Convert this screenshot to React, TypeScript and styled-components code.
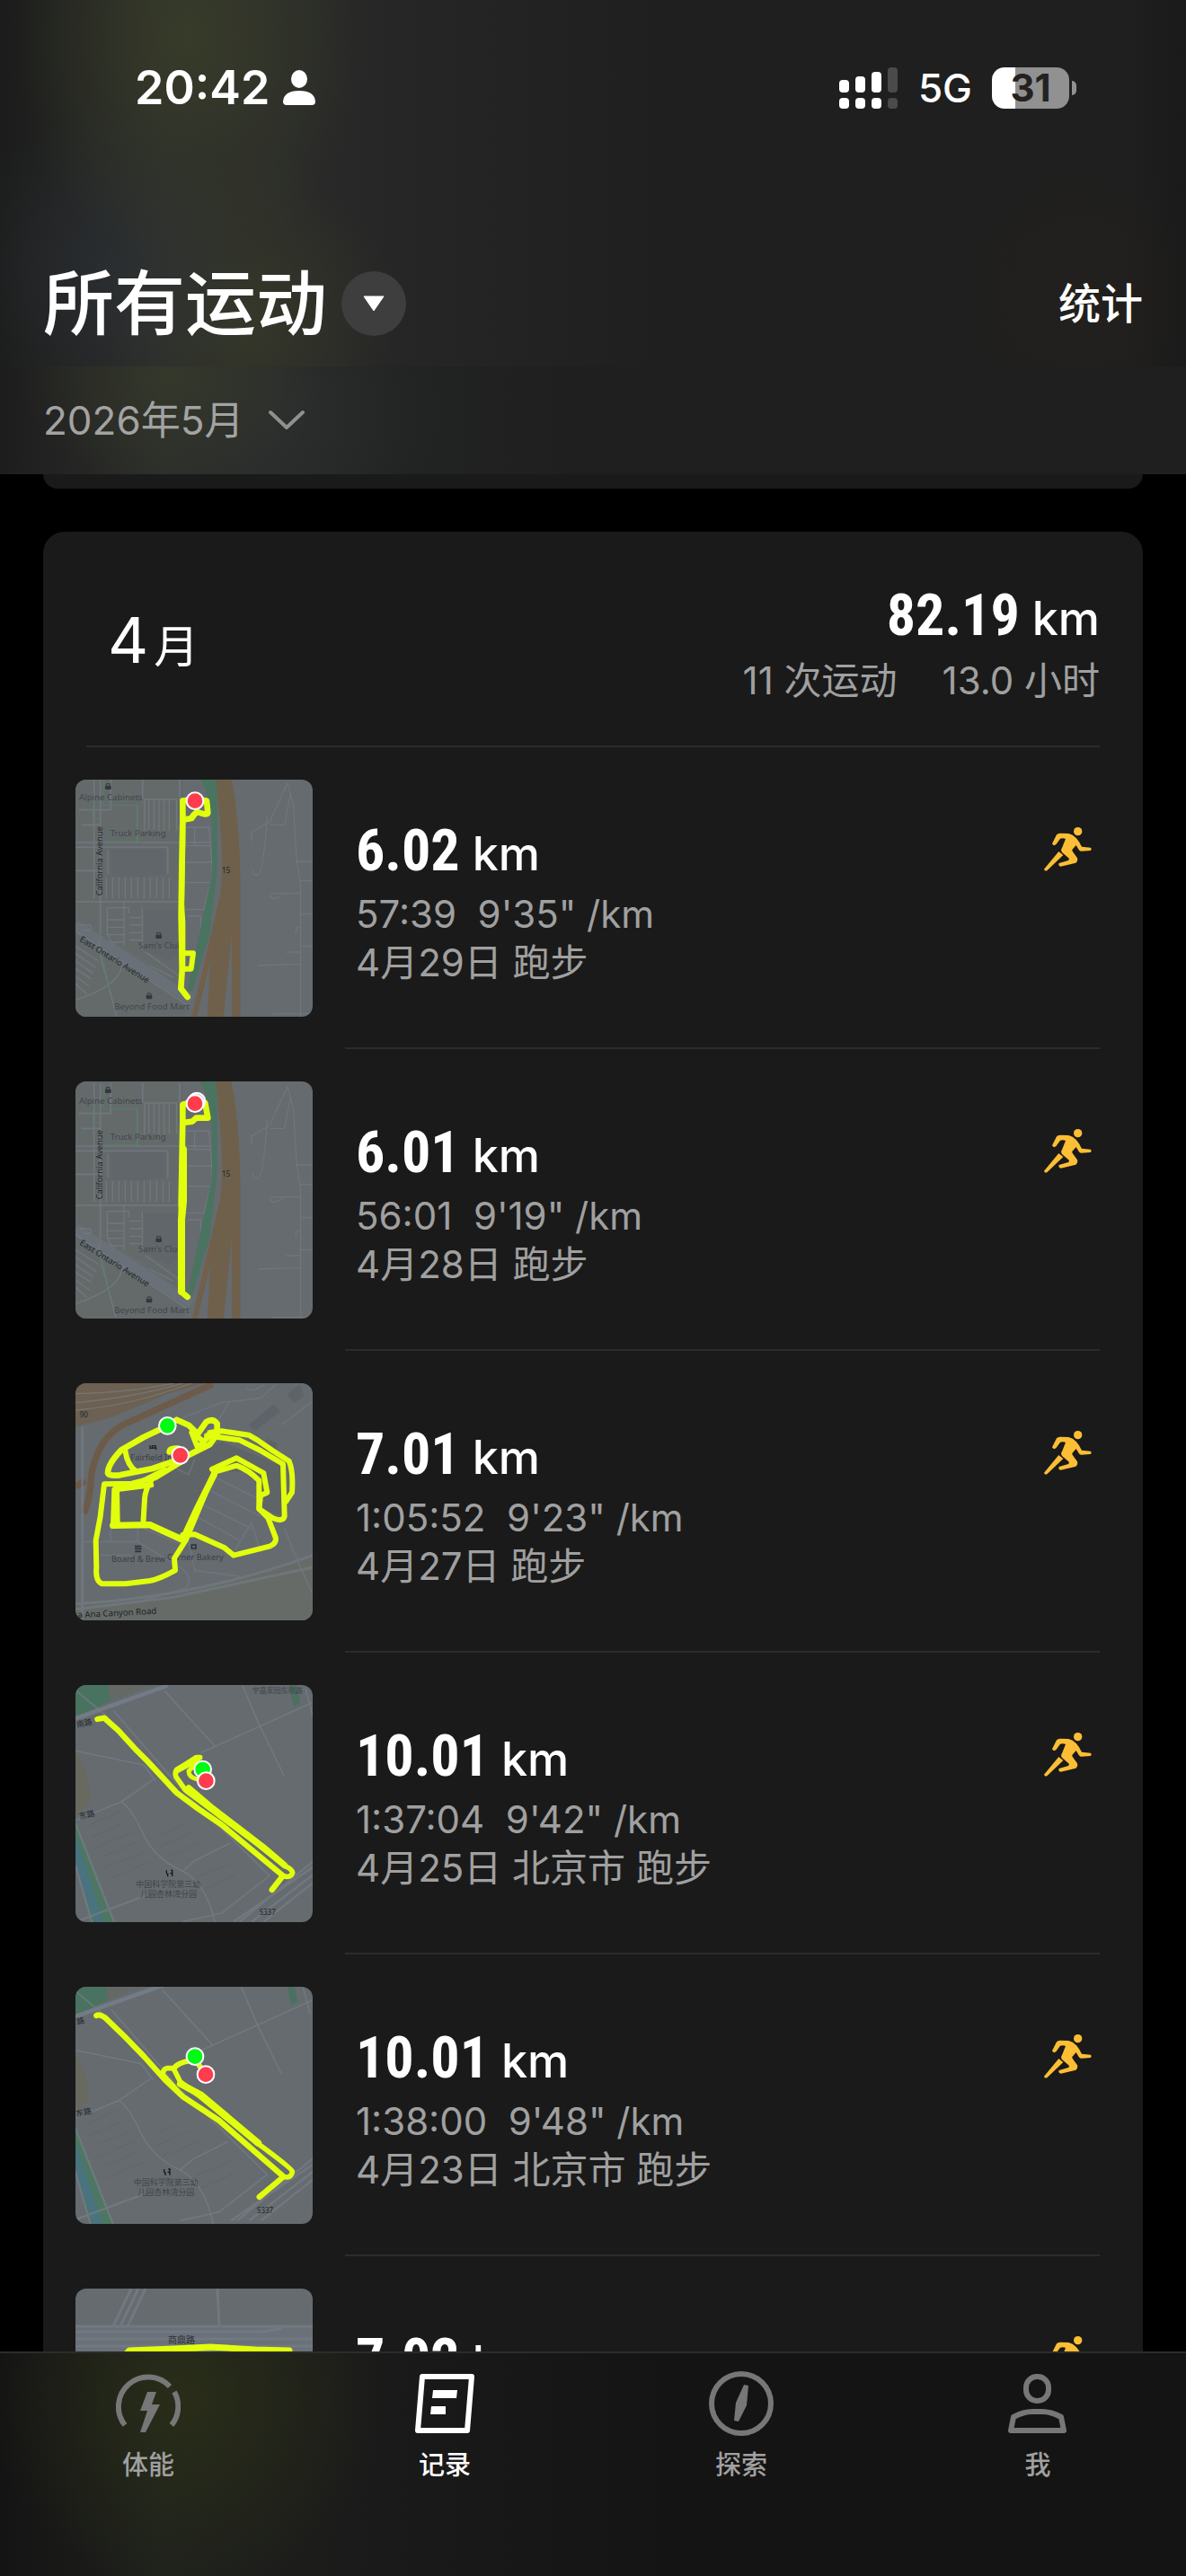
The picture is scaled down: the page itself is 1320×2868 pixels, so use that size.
import React from "react";
import styled, { createGlobalStyle, css } from "styled-components";

const sans = `Inter, "Noto Sans CJK SC", sans-serif`;
const condensed = `"Roboto Condensed", "Liberation Sans Narrow", "Roboto", "Noto Sans CJK SC", sans-serif`;

const GlobalStyle = createGlobalStyle`
  * { box-sizing: border-box; }
  body { margin: 0; background: #000; }
  h1, h2, p, ul { margin: 0; padding: 0; }
  ul { list-style: none; }
  a { color: inherit; text-decoration: none; }
  button { border: 0; padding: 0; background: none; color: inherit; font: inherit; cursor: pointer; }
`;

const Screen = styled.div`
  display: flex;
  flex-direction: column;
  height: 100vh;
  background: #000;
  color: #fff;
  font-family: ${sans};
`;

const Header = styled.header`
  flex: none;
`;

const HeaderTop = styled.div`
  display: flex;
  flex-direction: column;
  height: 408px;
  padding: 0 48px;
  background:
    radial-gradient(ellipse 200px 260px at 210px 40px, rgba(62, 68, 40, 0.65), rgba(62, 68, 40, 0)),
    radial-gradient(ellipse 170px 180px at 120px 300px, rgba(46, 51, 58, 0.55), rgba(46, 51, 58, 0)),
    radial-gradient(ellipse 170px 180px at 270px 350px, rgba(60, 64, 40, 0.6), rgba(60, 64, 40, 0)),
    radial-gradient(ellipse 150px 160px at 1200px 330px, rgba(40, 34, 28, 0.4), rgba(40, 34, 28, 0)),
    linear-gradient(90deg, #1b1c1b 0, #2a2b2a 180px, #2a2b2a 300px, #262626 440px, #1f1f1f 740px, #1f1f1f 95%, #1a1a1a 100%);
`;

const StatusBar = styled.div`
  display: flex;
  flex: none;
  align-items: center;
  justify-content: space-between;
  height: 196px;
  padding: 0 82px 0 102px;
`;

const StatusGroup = styled.div<{ $gap: number }>`
  display: flex;
  align-items: center;
  gap: ${(p) => p.$gap}px;
`;

const Clock = styled.span`
  font-size: 52px;
  font-weight: 600;
  line-height: 64px;
`;

const Network = styled.span`
  font-size: 44px;
  font-weight: 500;
  line-height: 64px;
`;

const Battery = styled.span`
  position: relative;
  display: flex;
  align-items: center;
  justify-content: center;
  width: 86px;
  height: 46px;
  border-radius: 14px;
  background: linear-gradient(90deg, #fff 30%, #919191 30%);
  color: #222;
  font-size: 42px;
  font-weight: 700;
  line-height: 46px;

  &::after {
    content: "";
    position: absolute;
    right: -8px;
    width: 5px;
    height: 16px;
    border-radius: 0 5px 5px 0;
    background: #919191;
  }
`;

const TitleBar = styled.div`
  display: flex;
  flex: 1;
  align-items: center;
  justify-content: space-between;
  padding-top: 72px;
`;

const TitleGroup = styled.div`
  display: flex;
  align-items: center;
  gap: 16px;
`;

const Title = styled.h1`
  font-size: 79px;
  font-weight: 500;
  line-height: 96px;
`;

const RoundButton = styled.button`
  display: flex;
  align-items: center;
  justify-content: center;
  width: 72px;
  height: 72px;
  border-radius: 50%;
  background: #3e3e3e;
`;

const StatsButton = styled.button`
  font-size: 47px;
  font-weight: 500;
  line-height: 60px;
`;

const DateBar = styled.div`
  display: flex;
  align-items: center;
  height: 120px;
  padding: 0 48px;
  background:
    radial-gradient(ellipse 170px 130px at 190px 10px, rgba(58, 62, 42, 0.6), rgba(58, 62, 42, 0)),
    radial-gradient(ellipse 170px 120px at 330px 50px, rgba(44, 48, 48, 0.5), rgba(44, 48, 48, 0)),
    linear-gradient(90deg, #1d1d1d 0, #2c2e2b 180px, #2a2c2b 300px, #222323 440px, #1f1f1f 640px, #1f1f1f 100%);
`;

const DateButton = styled.button`
  display: flex;
  align-items: center;
  gap: 28px;
  color: #a3a3a3;
  font-size: 44px;
  line-height: 54px;
`;

const Feed = styled.main`
  flex: 1;
  min-height: 0;
  overflow: hidden;
  padding: 0 48px;
`;

const CardTail = styled.div`
  height: 16px;
  margin-bottom: 48px;
  border-radius: 0 0 24px 24px;
  background: #1a1a1a;
`;

const Card = styled.section`
  border-radius: 24px;
  background: #1a1a1a;
`;

const MonthHeader = styled.div`
  display: flex;
  align-items: center;
  justify-content: space-between;
  height: 240px;
  margin: 0 48px;
  padding: 10px 0 0 24px;
  border-bottom: 2px solid #2c2c2c;
`;

const MonthName = styled.h2`
  display: flex;
  align-items: baseline;
  gap: 6px;
  font-size: 70px;
  font-weight: 400;
  line-height: 88px;
`;

const MonthUnit = styled.span`
  font-size: 50px;
`;

const MonthTotals = styled.div`
  display: flex;
  flex-direction: column;
  align-items: flex-end;
`;

const Distance = styled.p`
  display: flex;
  align-items: baseline;
  gap: 14px;
  font-family: ${condensed};
  font-size: 64px;
  font-weight: 700;
  line-height: 80px;
`;

const Unit = styled.span`
  font-family: ${sans};
  font-size: 52px;
  font-weight: 500;
`;

const TotalsLine = styled.p`
  display: flex;
  gap: 50px;
  color: #a0a0a0;
  font-size: 42px;
  line-height: 58px;
`;

const Row = styled.a`
  display: flex;
  height: 336px;
  padding: 0 48px 0 36px;
`;

const Thumb = styled.svg`
  flex: none;
  width: 264px;
  height: 264px;
  margin: 36px 36px 36px 0;
  border-radius: 12px;
  background: #656b6f;
  font-family: "Noto Sans", "Noto Sans CJK SC", sans-serif;
`;

const RowBody = styled.div`
  display: flex;
  flex: 1;
  align-items: flex-start;
  justify-content: space-between;
  padding: 76px 8px 0 12px;
  border-bottom: 2px solid #2c2c2c;
`;

const Detail = styled.p`
  color: #a0a0a0;
  font-size: 42px;
  line-height: 54px;
  white-space: pre;
`;

const RunnerIcon = styled.svg`
  width: 56px;
  height: 52px;
  margin-top: 12px;
`;

const TabBar = styled.nav`
  display: flex;
  flex: none;
  align-items: flex-start;
  height: 250px;
  border-top: 2px solid #2c2c2c;
  background:
    radial-gradient(ellipse 220px 220px at 210px 50px, rgba(46, 52, 22, 0.65), rgba(46, 52, 22, 0)),
    linear-gradient(90deg, #141414 0, #1f211d 180px, #1a1a1a 420px, #141414 760px, #141414 100%);
`;

const Tab = styled.a<{ $active?: boolean }>`
  display: flex;
  flex: 1;
  flex-direction: column;
  align-items: center;
  gap: 12px;
  padding-top: 20px;
  color: #a0a0a0;
  font-size: 29px;
  font-weight: 500;
  line-height: 42px;
  ${(p) => p.$active && css`color: #fff;`}

  svg {
    width: 72px;
    height: 72px;
    color: ${(p) => (p.$active ? "#fff" : "#777")};
  }
`;

const YELLOW = "#e1ff0c";

type RouteProps = { d: string; width?: number };
const Route = ({ d, width = 20 }: RouteProps) => (
  <path d={d} fill="none" stroke={YELLOW} strokeWidth={width} strokeLinecap="round" strokeLinejoin="round" />
);
const Road = ({ d, width = 5, color = "#767d88" }: RouteProps & { color?: string }) => (
  <path d={d} fill="none" stroke={color} strokeWidth={width} opacity="0.7" strokeLinejoin="round" />
);
const Dot = ({ x, y, color }: { x: number; y: number; color: string }) => (
  <circle cx={x} cy={y} r="28" fill={color} stroke="#fff" strokeWidth="6" />
);
const Shop = ({ x, y }: { x: number; y: number }) => (
  <g fill="#33383e">
    <rect x={x - 10} y={y - 3} width="20" height="13" rx="3" />
    <path d={`M${x - 6} ${y - 2}v-7h12v7`} fill="none" stroke="#33383e" strokeWidth="3" />
  </g>
);

function OntarioBase() {
  return (
    <>
      <path d="M72 60H430V800L300 680L72 560Z" fill="#646a6a" />
      <path d="M72 600L440 840V900H72Z" fill="#646a6a" />
      <path d="M190 310h180v90l-80 8h-95z M300 520h120v150l-40 20-80-40z" fill="#606669" />
      <Road d="M72 294H520M72 310H380L380 400 M155 84V620 M134 84V480 M72 388H150 M84 185H190V84 M92 235H155 M278 170V294 M296 84V150 M420 84V150 M302 150H410V255M302 150V255" />
      <Road d="M317 152V255M334 152V255M351 152V255M368 152V255M385 152V255 M175 410V480M196 410V480M217 410V480M238 410V480M259 410V480M280 410V480M301 410V480M322 410V480M343 410V480M364 410V480M385 410V480 M72 492H430 M180 320V400" width={4} />
      <Road d="M178 512H250V530 M178 512V600L200 640 M180 552H232M180 577H232M180 602H232M180 627H232 M234 490V640 M252 545H295M252 570H295M252 595H295M252 620H295 M295 512V650" width={4} />
      <Road d="M72 570L460 820" width={34} color="#6b727a" />
      <Road d="M72 590L450 840 M88 570H120Q128 578 120 586H100 M150 620L160 690L210 876 M72 690L130 730M72 715L125 750M72 740L118 775M72 765L110 800M72 640L150 690M72 665L140 712 M72 820Q230 770 230 690 M305 660L420 740M320 705L400 745" width={4} />
      <Road d="M165 676Q170 720 185 780 M130 180V215H160 M165 290H278V170H165V84" width={4} color="#4f8462" />
      <Road d="M440 243H518L530 400L500 518H440 M470 243V305 M440 305H525 M440 360H528M440 428H525 M445 540H490V620L480 720" width={4} />
      <path d="M490 72H545V380L520 600L462 790H446L528 400V240Q520 130 490 84Z" fill="#4a7360" />
      <path d="M540 72H592Q622 230 622 420V876H594V600L566 876H512L522 690L478 876H460L555 470Q568 390 555 230Z" fill="#6f604b" />
      <path d="M526 630L490 790M604 560V700" stroke="#805d47" strokeWidth="3" />
      <Road d="M780 95L720 225L660 260V290 M780 95L800 170L810 350L824 440V876 M712 205Q700 400 680 402Q655 400 668 385 M722 235H770L790 130 M810 357H864M822 422H864M822 464H750Q720 462 722 474Q735 490 760 470 M824 533H864M824 640H864M775 660H824M680 705L824 700M730 866H864 M824 576Q800 580 810 598" width={4} color="#737b82" />
      <g fill="#41464b" fontSize="29">
        <text x="84" y="152">Alpine Cabinets</text>
        <text x="188" y="274">Truck Parking</text>
        <text x="282" y="648">Sam's Club</text>
        <text x="202" y="852">Beyond Food Mart</text>
      </g>
      <g fill="#23272c" fontSize="28">
        <text transform="translate(163 472) rotate(-90)">California Avenue</text>
        <text transform="translate(84 622) rotate(32)">East Ontario Avenue</text>
        <text x="560" y="397" fontSize="26">15</text>
      </g>
      <Shop x={181} y={107} />
      <Shop x={350} y={605} />
      <Shop x={318} y={807} />
    </>
  );
}

function MapOne() {
  return (
    <Thumb viewBox="72 84 792 792" aria-hidden="true">
      <OntarioBase />
      <Route d="M446 810L424 782L428 720L425 540L427 380L430 220V155L470 150L510 155L514 195Q510 205 480 192Q465 200 460 213L432 218" />
      <Route d="M427 664H465L458 716H430V560L426 500L430 300V200" width={18} />
      <Dot x={471} y={155} color="#ff3b4e" />
    </Thumb>
  );
}

function MapTwo() {
  return (
    <Thumb viewBox="72 78 792 792" aria-hidden="true">
      <OntarioBase />
      <Route d="M446 798L424 780L428 660L425 480L430 210V155L470 145L505 150L514 200L475 200L462 212L430 216" />
      <Route d="M432 305V480L426 540V780" width={24} />
      <Dot x={477} y={144} color="#d8d8d8" />
      <Dot x={471} y={152} color="#ff3b4e" />
    </Thumb>
  );
}

function MapThree() {
  return (
    <Thumb viewBox="72 75 792 792" aria-hidden="true">
      <path d="M72 75H500L380 110L190 190L72 220Z" fill="#6c6152" />
      <path d="M72 110Q260 105 400 75M72 140Q280 120 430 75M72 165Q260 150 460 75" fill="none" stroke="#77746f" strokeWidth="4" />
      <path d="M100 510Q120 470 125 380Q150 250 240 210L530 78M72 420L105 402" fill="none" stroke="#6d5b4a" strokeWidth="22" />
      <path d="M72 815Q400 800 864 650V867H72Z" fill="#666b67" />
      <path d="M215 430L320 400L560 270L760 350L770 520L700 500L660 370L540 370L430 580L220 545Z" fill="#5f6567" />
      <path d="M650 215l85-70 20 25-85 65zM780 110l40-30 15 40-35 20zM710 260l35 15-10 40-40-10z" fill="#5d6369" />
      <Road d="M72 812Q480 790 864 650M95 220V867M72 830L400 790L864 690" width={9} color="#737a84" />
      <Road d="M430 190L560 140L690 125L740 80M640 90Q660 110 700 80M760 215L864 135M585 140L530 230M100 605H280L420 690Q470 720 440 760L300 800M190 545V605M145 650H260M280 605V560M300 560L440 620M540 390L700 470M515 430L690 520M495 480L660 560M475 520L620 600M450 600L470 700L620 720M770 560Q800 640 864 780M660 540L600 640M660 540L690 640M380 345L450 380L470 330" color="#717884" />
      <g fill="#3b4046" fontSize="28">
        <text x="86" y="190" fontSize="24" fill="#23272c">90</text>
        <text x="256" y="334">Fairfield Inn</text>
        <text x="192" y="671">Board &amp; Brew</text>
        <text x="378" y="665">Corner Bakery</text>
      </g>
      <text fill="#1e2227" fontSize="29" transform="translate(80 859) rotate(-3)">a Ana Canyon Road</text>
      <path d="M321 282v13M321 292h20v5M328 284h12v7h-12z" fill="none" stroke="#23272c" strokeWidth="4" />
      <path d="M270 620h22M270 628h22M271 637h20M460 615h14v12h-14z" fill="none" stroke="#2d3238" strokeWidth="5" />
      <Route d="M378 218L300 255L225 298Q180 345 180 375Q185 386 220 382L330 360L430 325L520 280L545 245L545 210Q530 190 508 205L480 245Q460 225 450 215L410 197L378 218" />
      <Route d="M238 300Q245 350 275 370M520 240L560 235L650 248L680 265L730 300L785 335Q800 370 795 440L775 470" width={18} />
      <Route d="M510 250L620 265L690 300L765 345L770 520Q765 540 730 525L685 495L685 400Q650 365 610 350L540 370" width={18} />
      <Route d="M528 362L610 325L700 375L712 440L690 450L685 495L715 525L740 590Q745 610 720 620L600 650L570 625L470 580L430 582" width={18} />
      <Route d="M540 362L440 600L402 660L405 700Q350 730 320 735L240 745H160Q138 735 142 690L140 600L155 520L168 412L260 410L340 390L430 335" width={18} />
      <Route d="M280 410L370 365M325 400Q305 430 303 460L298 545M208 430L325 415" width={18} />
      <Route d="M208 430L210 540M197 550L320 548L430 598L480 490L535 380" width={22} />
      <Route d="M202 430L198 550M460 240L480 290L520 250M475 250L500 270M385 305Q385 290 415 292" width={18} />
      <Dot x={379} y={217} color="#00fb13" />
      <Dot x={422} y={316} color="#ff3b4e" />
    </Thumb>
  );
}

function BeijingBase() {
  return (
    <>
      <path d="M72 78H180L190 130L72 190Z" fill="#4a7260" />
      <path d="M180 78H330L190 130Z" fill="#646965" />
      <path d="M72 300Q130 400 120 470L72 520Z" fill="#68695f" />
      <path d="M72 530L205 880H130L72 660Z" fill="#4d7762" />
      <path d="M72 580L170 880H140L72 680Z" fill="#47728a" opacity="0.7" />
      <path d="M785 75L808 75L822 138L800 150Z" fill="#4a7060" />
      <path d="M72 190L380 80" fill="none" stroke="#737b85" strokeWidth="14" />
      <Road d="M72 96L180 185M200 165L430 430L720 715L560 840L430 869M370 98L540 285M490 305L880 129M630 80L685 210L768 380M840 90L864 180M72 298L300 345L340 400M72 530L225 468L330 395M225 468Q260 490 300 580Q340 660 430 700M430 700L470 665L590 605M430 700Q510 740 540 880" width={5} />
      <Road d="M72 869L310 780M72 680L130 880M72 540L205 880M620 869L880 655M600 869L880 676M660 869L880 700M700 869L880 726" width={7} />
      <g stroke="#5f666c" strokeWidth="3" opacity="0.7">
        <path d="M110 550l110-50M125 585l110-45M140 620l120-50M155 655l120-50M170 690l130-55M185 725l130-55M350 580l80-35M350 620l110-50M370 655l120-50M480 720l120-50M500 760l110-50" />
      </g>
      <g fill="#3f454b" fontSize="27">
        <text x="274" y="752">中国科学院第三幼</text>
        <text x="288" y="785">儿园杏林湾分园</text>
      </g>
      <g fill="#22262b">
        <text x="686" y="845" fontSize="24">S337</text>
        <path d="M376 697v8q0 4 4 4v9M390 697h5v20M388 707h9" fill="none" stroke="#15181b" strokeWidth="4" />
      </g>
    </>
  );
}

function MapFour() {
  return (
    <Thumb viewBox="72 78 792 792" aria-hidden="true">
      <BeijingBase />
      <text x="662" y="104" fontSize="24" fill="#3f454b">宇晶家园东侧路</text>
      <g fill="#22262b" fontSize="26">
        <text transform="translate(78 220) rotate(-12)">南路</text>
        <text transform="translate(86 526) rotate(-12)">东路</text>
      </g>
      <Route d="M145 192L168 188L215 230L270 290L310 330L410 438L480 490L560 545L765 715L728 762" width={19} />
      <Route d="M765 715Q790 725 797 705Q795 692 770 682L680 610L520 490L440 430L408 385Q400 365 420 355L475 320H488" width={17} />
      <Route d="M450 422L530 490L700 620L770 680M412 362L480 325" width={21} />
      <Route d="M480 335L450 365Q450 385 475 392L500 400" width={15} />
      <Dot x={497} y={360} color="#00fb13" />
      <Dot x={508} y={398} color="#ff3b4e" />
    </Thumb>
  );
}

function MapFive() {
  return (
    <Thumb viewBox="80 88 792 792" aria-hidden="true">
      <BeijingBase />
      <g fill="#22262b" fontSize="26">
        <text transform="translate(86 214) rotate(-12)">路</text>
        <text transform="translate(84 522) rotate(-12)">东路</text>
      </g>
      <Route d="M150 184Q160 178 180 192L250 260L310 322L380 400L440 456L560 535L775 722L694 790" width={19} />
      <Route d="M775 722Q800 730 804 705Q802 695 700 620L490 450L430 405L407 360H385Q370 365 372 382L420 435" width={17} />
      <Route d="M430 412L500 450L690 610" width={23} />
      <Route d="M408 362Q420 340 480 332L510 375" width={18} />
      <Dot x={479} y={321} color="#00fb13" />
      <Dot x={515} y={381} color="#ff3b4e" />
    </Thumb>
  );
}

function MapSix() {
  return (
    <Thumb viewBox="0 0 264 264" aria-hidden="true">
      <path d="M0 42H264V264H0Z" fill="#6a7178" />
      <Road d="M62 0L42 42M70 0L50 42M78 0L58 42M158 0L160 42M0 42H264M0 48H210L230 44M0 56H264M0 64H264" width={3} />
      <text x="103" y="61" fontSize="10" fill="#2b3036">商鼎路</text>
      <Route d="M58 71L60 69L110 67L150 65L200 68L238 69V80" width={7} />
      <Route d="M58 120V74L110 72L180 73L236 74V120" width={6} />
    </Thumb>
  );
}

const runs = [
  { km: "6.02", time: "57:39", pace: `9'35" /km`, label: "4月29日 跑步", Map: MapOne },
  { km: "6.01", time: "56:01", pace: `9'19" /km`, label: "4月28日 跑步", Map: MapTwo },
  { km: "7.01", time: "1:05:52", pace: `9'23" /km`, label: "4月27日 跑步", Map: MapThree },
  { km: "10.01", time: "1:37:04", pace: `9'42" /km`, label: "4月25日 北京市 跑步", Map: MapFour },
  { km: "10.01", time: "1:38:00", pace: `9'48" /km`, label: "4月23日 北京市 跑步", Map: MapFive },
  { km: "7.02", time: "", pace: "", label: "", Map: MapSix },
];

const Runner = () => (
  <RunnerIcon viewBox="120 90 168 156" fill="#fcbe34" aria-hidden="true">
    <circle cx="239" cy="107" r="14" />
    <path d="M153 148L168 118Q172 113 180 113L208 114Q222 117 234 130L244 143Q247 150 252 158L281 161Q287 166 281 171L250 173Q245 173 242 168L233 153L220 168Q219 172 224 178L237 196Q240 206 232 212L182 224Q172 222 176 213L207 204Q212 201 208 196L187 178Q180 170 186 162L198 132Q190 128 180 131L166 151Q157 157 153 148Z" />
    <path d="M175 174L190 186L136 238Q128 241 126 233Z" />
  </RunnerIcon>
);

const tabs = [
  {
    name: "体能",
    icon: (
      <>
        <path d="M10 60A33 33 0 0 1 60 17M65 23A33 33 0 0 1 62 60" fill="none" stroke="currentColor" strokeWidth="6" />
        <path d="M35 23H45L40 37H49L33 68H27L35 44H27Z" fill="currentColor" />
      </>
    ),
  },
  {
    name: "记录",
    icon: (
      <>
        <path d="M11 6H66L61 66H6Z" fill="none" stroke="currentColor" strokeWidth="6" strokeLinejoin="round" />
        <path d="M23 21H50L49 30H22ZM21 39H37V48H20Z" fill="currentColor" />
      </>
    ),
  },
  {
    name: "探索",
    icon: (
      <>
        <circle cx="36" cy="36" r="33" fill="none" stroke="currentColor" strokeWidth="6" />
        <path d="M39 15L44 16L42 38L33 56L28 55L30 35Z" fill="currentColor" />
      </>
    ),
  },
  {
    name: "我",
    icon: (
      <g fill="none" stroke="currentColor" strokeWidth="6" strokeLinejoin="round">
        <rect x="23" y="6" width="25" height="27" rx="12" />
        <path d="M6 66L9 51Q20 45 30 45H41Q51 45 62 51L65 66Z" />
      </g>
    ),
  },
];

export default function App() {
  return (
    <Screen lang="zh-CN">
      <GlobalStyle />
      <Header>
        <HeaderTop>
          <StatusBar>
            <StatusGroup $gap={15}>
              <Clock>20:42</Clock>
              <svg width="36" height="40" viewBox="0 0 36 40" fill="#fff" aria-hidden="true">
                <ellipse cx="18" cy="10" rx="9" ry="10" />
                <path d="M0 35Q1 23 18 23Q35 23 36 35Q36 39 32 39H4Q0 39 0 35Z" />
              </svg>
            </StatusGroup>
            <StatusGroup $gap={22}>
              <svg width="66" height="46" viewBox="0 0 66 46" fill="#fff" aria-hidden="true">
                <rect x="0" y="14" width="11" height="14" rx="4" />
                <rect x="18" y="10" width="11" height="18" rx="4" />
                <rect x="36" y="5" width="11" height="23" rx="4" />
                <rect x="54" y="0" width="11" height="28" rx="4" fill="#4b4b4b" />
                <rect x="0" y="34" width="11" height="12" rx="4" />
                <rect x="18" y="34" width="11" height="12" rx="4" />
                <rect x="36" y="34" width="11" height="12" rx="4" />
                <rect x="54" y="34" width="11" height="12" rx="4" fill="#4b4b4b" />
              </svg>
              <Network>5G</Network>
              <Battery>31</Battery>
            </StatusGroup>
          </StatusBar>
          <TitleBar>
            <TitleGroup>
              <Title>所有运动</Title>
              <RoundButton aria-label="选择运动">
                <svg width="24" height="18" viewBox="0 0 24 18" aria-hidden="true">
                  <path d="M1 1H23L12 17Z" fill="#fff" stroke="#fff" strokeLinejoin="round" />
                </svg>
              </RoundButton>
            </TitleGroup>
            <StatsButton>统计</StatsButton>
          </TitleBar>
        </HeaderTop>
        <DateBar>
          <DateButton>
            2026年5月
            <svg width="40" height="24" viewBox="0 0 40 24" aria-hidden="true">
              <path d="M2 3L20 20L38 3" fill="none" stroke="#909090" strokeWidth="4" strokeLinecap="round" strokeLinejoin="round" />
            </svg>
          </DateButton>
        </DateBar>
      </Header>
      <Feed>
        <CardTail />
        <Card>
          <MonthHeader>
            <MonthName>
              4<MonthUnit>月</MonthUnit>
            </MonthName>
            <MonthTotals>
              <Distance>
                82.19<Unit>km</Unit>
              </Distance>
              <TotalsLine>
                <span>11 次运动</span>
                <span>13.0 小时</span>
              </TotalsLine>
            </MonthTotals>
          </MonthHeader>
          <ul>
            {runs.map(({ km, time, pace, label, Map }, i) => (
              <li key={i}>
                <Row href="#">
                  <Map />
                  <RowBody>
                    <div>
                      <Distance>
                        {km}
                        <Unit>km</Unit>
                      </Distance>
                      {time && (
                        <>
                          <Detail>{`${time}  ${pace}`}</Detail>
                          <Detail>{label}</Detail>
                        </>
                      )}
                    </div>
                    <Runner />
                  </RowBody>
                </Row>
              </li>
            ))}
          </ul>
        </Card>
      </Feed>
      <TabBar>
        {tabs.map((tab) => (
          <Tab key={tab.name} href="#" $active={tab.name === "记录"}>
            <svg viewBox="0 0 72 72" aria-hidden="true">
              {tab.icon}
            </svg>
            {tab.name}
          </Tab>
        ))}
      </TabBar>
    </Screen>
  );
}
